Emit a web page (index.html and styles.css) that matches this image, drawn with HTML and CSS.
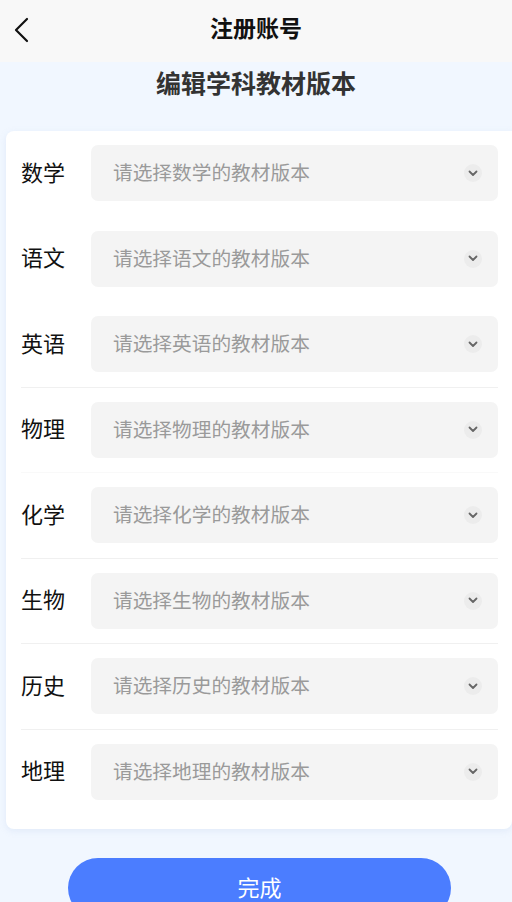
FILE: index.html
```html
<!DOCTYPE html>
<html lang="zh-CN">
<head>
<meta charset="utf-8">
<link rel="stylesheet" href="styles.css">
</head>
<body>
<div class="page">
  <header class="nav">
    <span class="back">
      <svg width="16" height="26" viewBox="0 0 16 26"><path d="M14 2 L3 13 L14 24" fill="none" stroke="#111" stroke-width="2.2" stroke-linecap="round" stroke-linejoin="round"/></svg>
    </span>
    <h1 class="nav-title">注册账号</h1>
  </header>
  <h2 class="subtitle">编辑学科教材版本</h2>
  <section class="card">
    <div class="row"><span class="label">数学</span><div class="select"><span class="ph">请选择数学的教材版本</span><span class="chev"><svg width="10" height="7" viewBox="0 0 10 7"><path d="M1.5 1.5 L5 5 L8.5 1.5" fill="none" stroke="#666" stroke-width="1.8" stroke-linecap="round" stroke-linejoin="round"/></svg></span></div></div>
    <div class="row"><span class="label">语文</span><div class="select"><span class="ph">请选择语文的教材版本</span><span class="chev"><svg width="10" height="7" viewBox="0 0 10 7"><path d="M1.5 1.5 L5 5 L8.5 1.5" fill="none" stroke="#666" stroke-width="1.8" stroke-linecap="round" stroke-linejoin="round"/></svg></span></div></div>
    <div class="row line"><span class="label">英语</span><div class="select"><span class="ph">请选择英语的教材版本</span><span class="chev"><svg width="10" height="7" viewBox="0 0 10 7"><path d="M1.5 1.5 L5 5 L8.5 1.5" fill="none" stroke="#666" stroke-width="1.8" stroke-linecap="round" stroke-linejoin="round"/></svg></span></div></div>
    <div class="row faint"><span class="label">物理</span><div class="select"><span class="ph">请选择物理的教材版本</span><span class="chev"><svg width="10" height="7" viewBox="0 0 10 7"><path d="M1.5 1.5 L5 5 L8.5 1.5" fill="none" stroke="#666" stroke-width="1.8" stroke-linecap="round" stroke-linejoin="round"/></svg></span></div></div>
    <div class="row line"><span class="label">化学</span><div class="select"><span class="ph">请选择化学的教材版本</span><span class="chev"><svg width="10" height="7" viewBox="0 0 10 7"><path d="M1.5 1.5 L5 5 L8.5 1.5" fill="none" stroke="#666" stroke-width="1.8" stroke-linecap="round" stroke-linejoin="round"/></svg></span></div></div>
    <div class="row line"><span class="label">生物</span><div class="select"><span class="ph">请选择生物的教材版本</span><span class="chev"><svg width="10" height="7" viewBox="0 0 10 7"><path d="M1.5 1.5 L5 5 L8.5 1.5" fill="none" stroke="#666" stroke-width="1.8" stroke-linecap="round" stroke-linejoin="round"/></svg></span></div></div>
    <div class="row line"><span class="label">历史</span><div class="select"><span class="ph">请选择历史的教材版本</span><span class="chev"><svg width="10" height="7" viewBox="0 0 10 7"><path d="M1.5 1.5 L5 5 L8.5 1.5" fill="none" stroke="#666" stroke-width="1.8" stroke-linecap="round" stroke-linejoin="round"/></svg></span></div></div>
    <div class="row"><span class="label">地理</span><div class="select"><span class="ph">请选择地理的教材版本</span><span class="chev"><svg width="10" height="7" viewBox="0 0 10 7"><path d="M1.5 1.5 L5 5 L8.5 1.5" fill="none" stroke="#666" stroke-width="1.8" stroke-linecap="round" stroke-linejoin="round"/></svg></span></div></div>
  </section>
  <div class="actions"><button class="done">完成</button></div>
</div>
</body>
</html>
```
FILE: styles.css
```css
* { box-sizing: border-box; margin: 0; padding: 0; }
html, body { width: 512px; height: 902px; overflow: hidden; }
body {
  background: #f1f7ff;
  font-family: "Noto Sans CJK SC", "Noto Sans", sans-serif;
  color: #111;
}
.page { display: flex; flex-direction: column; }
.nav {
  height: 62px;
  background: #f8f8f8;
  display: flex;
  align-items: center;
  justify-content: center;
  position: relative;
}
.back {
  position: absolute;
  left: 13px;
  top: 17px;
  display: flex;
}
.nav-title {
  font-size: 23px;
  font-weight: 700;
  line-height: 30px;
  margin-top: -8px;
  color: #111;
}
.subtitle {
  text-align: center;
  font-size: 25px;
  font-weight: 700;
  line-height: 32px;
  padding-top: 4px;
  color: #333;
  margin-bottom: 33px;
}
.card {
  margin-left: 6px;
  width: 506px;
  background: #fff;
  border-radius: 8px 0 8px 8px;
  box-shadow: 0 2px 6px rgba(180, 200, 230, 0.25);
  padding: 0 14px 14px 15px;
}
.row {
  display: flex;
  align-items: center;
  padding: 14px 0 14.5px;
  border-bottom: 1px solid transparent;
}
.row.line { border-bottom-color: #f0f0f0; }
.row.faint { border-bottom-color: #f9f9f9; }
.label {
  width: 70px;
  flex: none;
  font-size: 22px;
  line-height: 30px;
  padding-bottom: 5px;
  color: #111;
}
.select {
  flex: 1;
  height: 56px;
  background: #f4f4f4;
  border-radius: 7px;
  display: flex;
  align-items: center;
  justify-content: space-between;
  padding: 0 16px 0 22px;
}
.ph {
  font-size: 19.7px;
  color: #9a9a9a;
  line-height: 28px;
  padding-bottom: 2px;
}
.chev {
  width: 18px;
  height: 18px;
  border-radius: 50%;
  background: #ececec;
  display: flex;
  align-items: center;
  justify-content: center;
}
.actions {
  display: flex;
  padding-top: 29px;
  padding-left: 68px;
}
.done {
  width: 383px;
  height: 60px;
  border: none;
  border-radius: 30px;
  background: #4b7dff;
  color: #fff;
  font-family: "Noto Sans CJK SC", sans-serif;
  font-size: 22px;
  line-height: 56px;
  padding-bottom: 4px;
}
```
